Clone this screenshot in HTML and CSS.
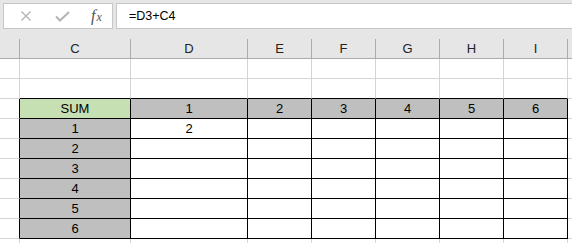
FILE: index.html
```html
<!DOCTYPE html>
<html lang="en">
<head>
    <meta charset="UTF-8">
    <title>SUM</title>
    <link rel="stylesheet" href="styles.css">
</head>
<body>
    <div class="formula-bar">
        <div class="fx-box">
            <svg class="icon" width="12" height="12" viewBox="0 0 12 12">
                <path d="M1.5 1.5 L10.5 10.5 M10.5 1.5 L1.5 10.5" stroke="#b4b4b4" stroke-width="1.4" fill="none"/>
            </svg>
            <svg class="icon" width="15" height="11" viewBox="0 0 15 11">
                <path d="M1 5.5 L5 9.5 L14 1" stroke="#b4b4b4" stroke-width="2" fill="none"/>
            </svg>
            <span class="fx">f<sub>x</sub></span>
        </div>
        <div class="formula">=D3+C4</div>
    </div>

    <div class="sheet">
        <div class="row head">
            <div class="cell"></div>
            <div class="cell">C</div>
            <div class="cell">D</div>
            <div class="cell">E</div>
            <div class="cell">F</div>
            <div class="cell">G</div>
            <div class="cell">H</div>
            <div class="cell">I</div>
            <div class="cell last"></div>
        </div>

        <div class="row">
            <div class="cell"></div>
            <div class="cell"></div><div class="cell"></div><div class="cell"></div><div class="cell"></div>
            <div class="cell"></div><div class="cell"></div><div class="cell"></div>
            <div class="cell last"></div>
        </div>
        <div class="row above">
            <div class="cell"></div>
            <div class="cell"></div><div class="cell"></div><div class="cell"></div><div class="cell"></div>
            <div class="cell"></div><div class="cell"></div><div class="cell"></div>
            <div class="cell last"></div>
        </div>

        <div class="row tbl">
            <div class="cell"></div>
            <div class="cell sum">SUM</div>
            <div class="cell gray">1</div>
            <div class="cell gray">2</div>
            <div class="cell gray">3</div>
            <div class="cell gray">4</div>
            <div class="cell gray">5</div>
            <div class="cell gray">6</div>
            <div class="cell last"></div>
        </div>
        <div class="row tbl">
            <div class="cell"></div>
            <div class="cell gray">1</div>
            <div class="cell">2</div>
            <div class="cell"></div><div class="cell"></div><div class="cell"></div><div class="cell"></div><div class="cell"></div>
            <div class="cell last"></div>
        </div>
        <div class="row tbl">
            <div class="cell"></div>
            <div class="cell gray">2</div>
            <div class="cell"></div><div class="cell"></div><div class="cell"></div><div class="cell"></div><div class="cell"></div><div class="cell"></div>
            <div class="cell last"></div>
        </div>
        <div class="row tbl">
            <div class="cell"></div>
            <div class="cell gray">3</div>
            <div class="cell"></div><div class="cell"></div><div class="cell"></div><div class="cell"></div><div class="cell"></div><div class="cell"></div>
            <div class="cell last"></div>
        </div>
        <div class="row tbl">
            <div class="cell"></div>
            <div class="cell gray">4</div>
            <div class="cell"></div><div class="cell"></div><div class="cell"></div><div class="cell"></div><div class="cell"></div><div class="cell"></div>
            <div class="cell last"></div>
        </div>
        <div class="row tbl">
            <div class="cell"></div>
            <div class="cell gray">5</div>
            <div class="cell"></div><div class="cell"></div><div class="cell"></div><div class="cell"></div><div class="cell"></div><div class="cell"></div>
            <div class="cell last"></div>
        </div>
        <div class="row tbl">
            <div class="cell"></div>
            <div class="cell gray">6</div>
            <div class="cell"></div><div class="cell"></div><div class="cell"></div><div class="cell"></div><div class="cell"></div><div class="cell"></div>
            <div class="cell last"></div>
        </div>

        <div class="row tail">
            <div class="cell"></div>
            <div class="cell"></div><div class="cell"></div><div class="cell"></div><div class="cell"></div>
            <div class="cell"></div><div class="cell"></div><div class="cell"></div>
            <div class="cell last"></div>
        </div>
    </div>
</body>
</html>
```

FILE: styles.css
```css
/* 页面基础 */
html, body {
    margin: 0;
    background: #fff;
    overflow: hidden;
}
body {
    font-family: "Liberation Sans", Arial, sans-serif;
    font-size: 13px;
    color: #000;
}

/* 编辑栏 */
.formula-bar {
    height: 39px;
    box-sizing: border-box;
    padding-top: 3px;
    background: #e6e6e6;
    display: flex;
    align-items: flex-start;
}
.fx-box {
    margin-left: 3px;
    width: 110px;
    height: 26px;
    box-sizing: border-box;
    background: #fff;
    border: 1px solid #c6c6c6;
    display: flex;
    align-items: center;
    padding-left: 16px;
}
.fx-box .icon {
    display: block;
}
.fx-box .icon + .icon {
    margin-left: 23px;
}
.fx {
    margin-left: 21px;
    font-family: "Liberation Serif", "Times New Roman", serif;
    font-style: italic;
    font-size: 16px;
    color: #555;
    line-height: 1;
}
.fx sub {
    font-size: 12px;
    vertical-align: 0;
    margin-left: 1px;
}
.formula {
    margin-left: 3px;
    flex: 1;
    height: 26px;
    box-sizing: border-box;
    background: #fff;
    border: 1px solid #c6c6c6;
    border-right: none;
    padding-left: 12px;
    line-height: 24px;
    font-size: 12.5px;
}

/* 表格区域 */
.sheet {
    height: 204px;
    overflow: hidden;
}
.row {
    display: grid;
    grid-template-columns: 20px 111px 117px repeat(5, 64px) 1fr;
    height: 20px;
}
.row.tail {
    height: 4px;
}
.cell {
    box-sizing: border-box;
    border-right: 1px solid #d4d4d4;
    border-bottom: 1px solid #d4d4d4;
    text-align: center;
    line-height: 19px;
    overflow: hidden;
}
.tail .cell {
    border-bottom: none;
}
.cell.last {
    border-right: none;
}

/* 列标题 */
.head .cell {
    background: #e6e6e6;
    border-right-color: #ababab;
    border-bottom-color: #ababab;
    color: #222;
}

/* 黑色框线 */
.above .cell:nth-child(n+2):nth-child(-n+8) {
    border-bottom-color: #000;
}
.tbl .cell:nth-child(-n+8) {
    border-right-color: #000;
}
.tbl .cell:nth-child(n+2):nth-child(-n+8) {
    border-bottom-color: #000;
}

.sum {
    background: #c6e0b4;
}
.gray {
    background: #bfbfbf;
}
```
